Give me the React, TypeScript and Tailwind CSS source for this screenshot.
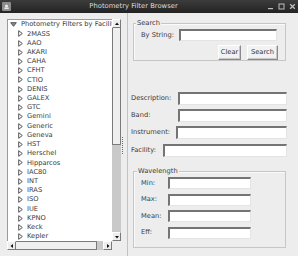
import React from "react";

const items = [
  "2MASS","AAO","AKARI","CAHA","CFHT","CTIO","DENIS","GALEX","GTC","Gemini","Generic","Geneva","HST","Herschel","Hipparcos","IAC80","INT","IRAS","ISO","IUE","KPNO","Keck","Kepler",
];

function RightTri() {
  return (
    <svg width="5" height="7" viewBox="0 0 5 7" className="shrink-0">
      <polygon points="0.7,0.7 4.3,3.5 0.7,6.3" fill="white" stroke="#555" strokeWidth="1" />
    </svg>
  );
}

function DownTri() {
  return (
    <svg width="7" height="5" viewBox="0 0 7 5" className="shrink-0">
      <polygon points="0.7,0.7 6.3,0.7 3.5,4.3" fill="#8a8a8a" stroke="#555" strokeWidth="1" />
    </svg>
  );
}

function ArrowBtn({ dir, className = "" }: { dir: "up" | "down" | "left" | "right"; className?: string }) {
  const pts: Record<string, string> = {
    up: "1,4 5,4 3,1.5",
    down: "1,2 5,2 3,4.5",
    left: "4,1 4,5 1.5,3",
    right: "2,1 2,5 4.5,3",
  };
  return (
    <div className={`flex items-center justify-center bg-[#eeeeee] border-t border-l border-t-white border-l-white border-b border-r border-b-[#7a7a7a] border-r-[#7a7a7a] ${className}`}>
      <svg width="6" height="6" viewBox="0 0 6 6">
        <polygon points={pts[dir]} fill="#111" />
      </svg>
    </div>
  );
}

function Field({ className = "" }: { className?: string }) {
  return (
    <div className={`bg-white border-t-2 border-l-2 border-t-[#747474] border-l-[#747474] border-b border-r border-b-[#e4e4e4] border-r-[#e4e4e4] ${className}`} />
  );
}

function Button({ label, className = "" }: { label: string; className?: string }) {
  return (
    <div className={`flex items-center justify-center bg-[#f2f2f2] border border-t-white border-l-white border-b-[#8a8a8a] border-r-[#8a8a8a] shadow-[inset_-1px_-1px_0_#c8c8c8] text-[#333] ${className}`}>
      {label}
    </div>
  );
}

export default function App() {
  return (
    <div className="w-[298px] h-[256px] overflow-hidden bg-[#ededed] font-['DejaVu_Sans',sans-serif] text-[6.7px] text-[#3a3a3a] leading-none">
      {/* title bar */}
      <div className="h-[13px] bg-gradient-to-b from-[#3c3c3c] to-[#232323] flex items-center relative">
        <div className="ml-[2px] w-[9px] h-[9px] bg-[#8c8c8c] rounded-[1px] flex items-center justify-center">
          <svg width="7" height="7" viewBox="0 0 7 7">
            <circle cx="3.5" cy="3" r="1.6" fill="#e8e8e8" />
            <rect x="1.3" y="4.5" width="4.4" height="1.6" fill="#e8e8e8" />
          </svg>
        </div>
        <div className="flex-1 text-center text-[#dcdcdc] text-[6.8px] pr-[11px]">Photometry Filter Browser</div>
        <div className="flex items-center gap-[4px] mr-[2px] text-[#bdbdbd]">
          <svg width="7" height="7" viewBox="0 0 7 7"><rect x="1" y="5" width="5" height="1.2" fill="#bdbdbd" /></svg>
          <svg width="7" height="7" viewBox="0 0 7 7"><rect x="1" y="1" width="5" height="5" fill="none" stroke="#bdbdbd" strokeWidth="1" /></svg>
          <svg width="7" height="7" viewBox="0 0 7 7"><path d="M1.2 1.2 L5.8 5.8 M5.8 1.2 L1.2 5.8" stroke="#bdbdbd" strokeWidth="1.3" /></svg>
        </div>
      </div>

      <div className="flex h-[243px]">
        {/* left tree scroll pane */}
        <div className="ml-[7px] mt-[6px] w-[114px] h-[231px] flex flex-col">
          <div className="flex h-[222px]">
            <div className="w-[105px] bg-white border-t border-l border-[#9a9a9a] overflow-hidden">
              <div className="flex items-center h-[9.25px] pl-[2px] gap-[4px] whitespace-nowrap">
                <DownTri />
                <span>Photometry Filters by Facility</span>
              </div>
              {items.map((it) => (
                <div key={it} className="flex items-center h-[9.22px] pl-[10px] gap-[4px] whitespace-nowrap">
                  <RightTri />
                  <span>{it}</span>
                </div>
              ))}
            </div>
            <div className="w-[9px] flex flex-col">
              <ArrowBtn dir="up" className="h-[9px]" />
              <div className="h-[117px] bg-[#efefef] border-l border-r border-b border-[#7a7a7a]" />
              <div className="flex-1 bg-[#c9c9c9]" />
              <ArrowBtn dir="down" className="h-[9px]" />
            </div>
          </div>
          <div className="flex h-[9px]">
            <div className="w-[105px] flex">
              <ArrowBtn dir="left" className="w-[9px]" />
              <div className="w-[81px] bg-[#efefef] border-t border-b border-r border-[#7a7a7a]" />
              <div className="flex-1 bg-[#c9c9c9]" />
              <ArrowBtn dir="right" className="w-[9px]" />
            </div>
          </div>
        </div>

        {/* split divider */}
        <div className="w-[7px] flex items-center border-r border-r-[#c2c2c2]">
          <div className="ml-[1px] h-[17px] w-[1px] border-l border-dotted border-[#6a6a6a] mt-[21px]" />
        </div>

        {/* right panel */}
        <div className="flex-1 flex flex-col">
          {/* Search box */}
          <div className="relative ml-[5px] mt-[10px] w-[153px] h-[38px] border border-[#c6c6c6] shadow-[inset_1px_1px_0_#fafafa]">
            <div className="absolute left-[2px] top-[-4px] px-[1px] bg-[#ededed]">Search</div>
            <div className="flex items-center mt-[5px] ml-[7px] h-[12px]">
              <span className="w-[38px]">By String:</span>
              <Field className="w-[98px] h-[12px]" />
            </div>
            <div className="flex justify-end mt-[4px] mr-[7px] gap-[6px]">
              <Button label="Clear" className="w-[23px] h-[15px]" />
              <Button label="Search" className="w-[31px] h-[15px]" />
            </div>
          </div>

          {/* description fields */}
          <div className="flex flex-col mt-[31px] ml-[3px] gap-[4px]">
            <div className="flex items-center h-[13px]">
              <span className="w-[47px]">Description:</span>
              <Field className="w-[109px] h-[13px]" />
            </div>
            <div className="flex items-center h-[13px]">
              <span className="w-[47px]">Band:</span>
              <Field className="w-[109px] h-[13px]" />
            </div>
            <div className="flex items-center h-[13px]">
              <span className="w-[45px]">Instrument:</span>
              <Field className="w-[111px] h-[13px]" />
            </div>
            <div className="flex items-center h-[13px] mt-[1px]">
              <span className="w-[32px]">Facility:</span>
              <Field className="w-[124px] h-[13px]" />
            </div>
          </div>

          {/* wavelength box */}
          <div className="relative ml-[5px] mt-[14px] w-[153px] h-[77px] border border-[#c6c6c6] shadow-[inset_1px_1px_0_#fafafa]">
            <div className="absolute left-[3px] top-[-4px] px-[1px] bg-[#ededed]">Wavelength</div>
            <div className="flex flex-col mt-[5px] ml-[7px] gap-[4.6px]">
              {["Min:", "Max:", "Mean:", "Eff:"].map((l) => (
                <div key={l} className="flex items-center h-[12px]">
                  <span className="w-[27px]">{l}</span>
                  <Field className="w-[83px] h-[12px]" />
                </div>
              ))}
            </div>
          </div>
        </div>
      </div>
    </div>
  );
}
